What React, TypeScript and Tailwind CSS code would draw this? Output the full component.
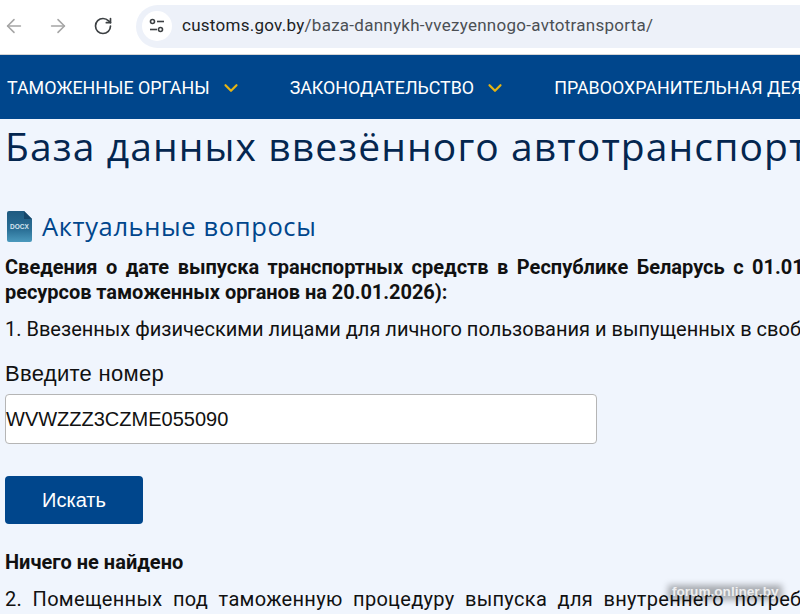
import React from 'react';
import { ArrowLeft, ArrowRight, RotateCw, ChevronDown } from 'lucide-react';

function SiteInfoIcon() {
  return (
    <svg width="20" height="20" viewBox="0 0 20 20" fill="none" stroke="#3c4043" strokeWidth="1.6">
      <circle cx="5.5" cy="5.5" r="2" />
      <path d="M10 5.5h7" />
      <circle cx="13.5" cy="13.5" r="2" />
      <path d="M3 13.5h7" />
    </svg>
  );
}

function DocxIcon() {
  return (
    <svg width="25" height="31" viewBox="0 0 25 31" className="shrink-0 ml-[2px]">
      <defs>
        <linearGradient id="docx" x1="0" y1="0" x2="0" y2="1">
          <stop offset="0" stopColor="#1f5a80" />
          <stop offset="0.6" stopColor="#2a6f96" />
          <stop offset="1" stopColor="#4b9abd" />
        </linearGradient>
      </defs>
      <path d="M2 0h15l8 8v21a2 2 0 0 1-2 2H2a2 2 0 0 1-2-2V2a2 2 0 0 1 2-2z" fill="url(#docx)" />
      <path d="M17 0l8 8h-8z" fill="#17476a" />
      <text x="12.5" y="18" textAnchor="middle" fontSize="6.5" fontWeight="700" fill="#d5e4ee" fontFamily="'Liberation Sans', sans-serif">DOCX</text>
    </svg>
  );
}

function NavItem({ label, chevron }: { label: string; chevron?: boolean }) {
  return (
    <div className="flex items-center shrink-0">
      <span>{label}</span>
      {chevron && <ChevronDown className="w-[22px] h-[22px] ml-[10px] text-[#e6b412] shrink-0" strokeWidth={2.4} />}
    </div>
  );
}

export default function App() {
  return (
    <div className="relative w-[800px] h-[614px] overflow-hidden bg-[#f0f5fd] whitespace-nowrap font-['Roboto',sans-serif] text-[#111]">
      {/* browser toolbar */}
      <div className="h-[55px] bg-white border-b border-[#d5d5d5] flex items-center pb-[2px]">
        <ArrowLeft className="w-[22px] h-[22px] ml-[3px] shrink-0 text-[#a5a5a5]" strokeWidth={1.7} />
        <ArrowRight className="w-[22px] h-[22px] ml-[22px] shrink-0 text-[#a5a5a5]" strokeWidth={1.7} />
        <RotateCw className="w-[20px] h-[20px] ml-[24px] shrink-0 text-[#3c4043]" strokeWidth={2} />
        <div className="ml-[23px] w-[700px] h-[43px] rounded-l-full bg-[#edf1f9] flex items-center pl-[6px] shrink-0">
          <div className="w-[30px] h-[30px] rounded-full bg-white flex items-center justify-center">
            <SiteInfoIcon />
          </div>
          <span className="ml-[10px] text-[17px] tracking-[0.27px] text-[#202124]">
            customs.gov.by<span className="text-[#4b4f54]">/baza-dannykh-vvezyennogo-avtotransporta/</span>
          </span>
        </div>
      </div>

      {/* site menu */}
      <nav className="h-[64px] bg-[#00468c] text-white text-[17.85px] flex items-center gap-[48px] pl-[7px] pt-[2px]">
        <NavItem label="ТАМОЖЕННЫЕ ОРГАНЫ" chevron />
        <NavItem label="ЗАКОНОДАТЕЛЬСТВО" chevron />
        <NavItem label="ПРАВООХРАНИТЕЛЬНАЯ ДЕЯТЕЛЬНОСТЬ" />
      </nav>

      <main className="pl-[5px]">
        <h1 className="mt-[2px] text-[39px] leading-[50px] tracking-[1.1px] text-[#04264f] font-['Open_Sans',sans-serif]">
          База данных ввезённого автотранспорта
        </h1>

        <div className="mt-[39px] flex items-center h-[32px]">
          <DocxIcon />
          <h2 className="ml-[10px] text-[25.5px] tracking-[0.63px] text-[#00468c] font-['Open_Sans',sans-serif]">Актуальные вопросы</h2>
        </div>

        <p className="mt-[13px] text-[20px] leading-[25px] font-bold [word-spacing:3.5px]">
          Сведения о дате выпуска транспортных средств в Республике Беларусь с 01.01.2021
        </p>
        <p className="text-[20px] leading-[25px] font-bold tracking-[-0.05px]">ресурсов таможенных органов на 20.01.2026):</p>

        <p className="mt-[12px] text-[20px] leading-[25px]">
          1. Ввезенных физическими лицами для личного пользования и выпущенных в свободное обращение
        </p>

        <label className="block mt-[18px] text-[22px] leading-[28px] tracking-[0.3px] font-['Liberation_Sans',sans-serif]">Введите номер</label>
        <div className="mt-[6px] w-[592px] h-[50px] bg-white border border-[#b5b5b5] rounded-[4px] flex items-center text-[20px] font-['Liberation_Sans',sans-serif]">
          WVWZZZ3CZME055090
        </div>

        <button className="block mt-[32px] w-[138px] h-[48px] bg-[#00468c] rounded-[4px] text-white text-[20px] font-['Liberation_Sans',sans-serif]">
          Искать
        </button>

        <p className="mt-[26px] text-[20px] leading-[25px] font-bold">Ничего не найдено</p>
        <p className="mt-[12px] text-[20px] leading-[25px] [word-spacing:5.2px] tracking-[0.3px]">
          2. Помещенных под таможенную процедуру выпуска для внутреннего потребления
        </p>
      </main>

      {/* forum watermark */}
      <div className="absolute left-[668px] top-[585px] w-[114px] h-[15px] bg-black/30 blur-[3px]" />
      <div className="absolute left-[672px] top-[584px] text-[13.6px] leading-[16px] font-bold text-white/80 font-['Liberation_Sans',sans-serif]">
        forum.onliner.by
      </div>
    </div>
  );
}
